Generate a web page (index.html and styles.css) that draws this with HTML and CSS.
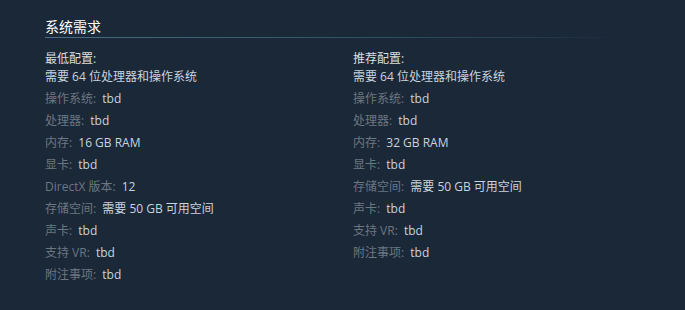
FILE: index.html
```html
<!DOCTYPE html>
<html lang="zh-CN">
<head>
<meta charset="utf-8">
<title>系统需求</title>
<link rel="stylesheet" href="styles.css">
</head>
<body>
<div class="page">
  <section class="sysreq">
    <h2 class="sysreq-title">系统需求</h2>
    <div class="sysreq-cols">
      <div class="sysreq-col">
        <div class="col-head">最低配置:</div>
        <ul class="req-list">
          <li>需要 64 位处理器和操作系统</li>
          <li><span class="lbl">操作系统:</span> tbd</li>
          <li><span class="lbl">处理器:</span> tbd</li>
          <li><span class="lbl">内存:</span> 16 GB RAM</li>
          <li><span class="lbl">显卡:</span> tbd</li>
          <li><span class="lbl">DirectX 版本:</span> 12</li>
          <li><span class="lbl">存储空间:</span> 需要 50 GB 可用空间</li>
          <li><span class="lbl">声卡:</span> tbd</li>
          <li><span class="lbl">支持 VR:</span> tbd</li>
          <li><span class="lbl">附注事项:</span> tbd</li>
        </ul>
      </div>
      <div class="sysreq-col">
        <div class="col-head">推荐配置:</div>
        <ul class="req-list">
          <li>需要 64 位处理器和操作系统</li>
          <li><span class="lbl">操作系统:</span> tbd</li>
          <li><span class="lbl">处理器:</span> tbd</li>
          <li><span class="lbl">内存:</span> 32 GB RAM</li>
          <li><span class="lbl">显卡:</span> tbd</li>
          <li><span class="lbl">存储空间:</span> 需要 50 GB 可用空间</li>
          <li><span class="lbl">声卡:</span> tbd</li>
          <li><span class="lbl">支持 VR:</span> tbd</li>
          <li><span class="lbl">附注事项:</span> tbd</li>
        </ul>
      </div>
    </div>
  </section>
</div>
</body>
</html>
```
FILE: styles.css
```css
html, body {
  margin: 0;
  padding: 0;
  background: #1b2838;
}
body {
  font-family: "Open Sans", "Noto Sans CJK SC", sans-serif;
  font-size: 12px;
  color: #acb2b8;
}
.page {
  height: 310px;
  overflow: hidden;
}
.sysreq {
  width: 616px;
  padding: 17px 0 0 45px;
}
.sysreq-title {
  margin: 0;
  font-size: 14px;
  font-weight: normal;
  line-height: 20px;
  color: #ffffff;
  padding-bottom: 2px;
}
.sysreq-title::after {
  content: "";
  display: block;
  height: 1px;
  width: 572px;
  background: linear-gradient(to right, #4a6d84 0%, #2f5a6e 45%, #243c50 85%, rgba(27, 40, 56, 0) 100%);
}
.sysreq-cols {
  display: flex;
  margin-top: 10px;
}
.sysreq-col {
  width: 50%;
}
.col-head {
  line-height: 18px;
  color: #dcdedf;
}
.req-list {
  list-style: none;
  margin: 0;
  padding: 0;
}
.req-list li {
  line-height: 18px;
  margin-bottom: 4px;
  color: #c6d4df;
  white-space: nowrap;
}
.lbl {
  color: #6c7781;
  margin-right: 3px;
}
```
